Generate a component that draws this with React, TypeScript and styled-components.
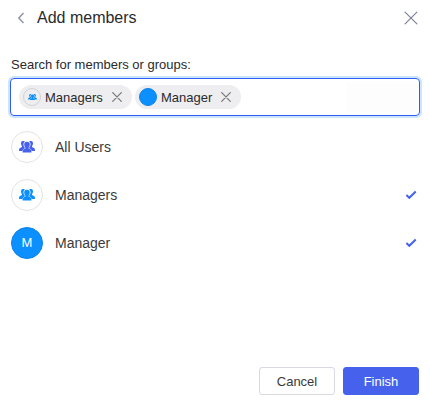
import React from "react";
import styled, { createGlobalStyle } from "styled-components";

const GlobalStyle = createGlobalStyle`
  * { box-sizing: border-box; }
  body {
    margin: 0;
    background: #fff;
    color: #333;
    font-family: "Liberation Sans", Arial, sans-serif;
  }
`;

const Dialog = styled.main`
  display: flex;
  flex-direction: column;
  width: 430px;
  height: 404px;
  overflow: hidden;
`;

const Header = styled.header`
  display: flex;
  align-items: center;
  height: 36px;
  padding: 0 12px 0 16px;
`;

const Title = styled.h1`
  flex: 1;
  margin: 0 0 0 11px;
  font-size: 16px;
  line-height: 24px;
  font-weight: 400;
  color: #2a2a2c;
`;

const IconButton = styled.button`
  display: flex;
  padding: 0;
  border: 0;
  background: none;
  svg { display: block; }
`;

const Label = styled.label`
  margin: 20px 11px 0;
  height: 16px;
  font-size: 13px;
  line-height: 17px;
  color: #2a2a2c;
`;

const TagField = styled.div`
  display: flex;
  align-items: center;
  gap: 3px;
  height: 38px;
  margin: 6px 10px 0;
  padding-left: 8px;
  border: 1px solid #2f5ef5;
  border-radius: 4px;
  box-shadow: 0 0 0 2px #cce5ff;
`;

const Chip = styled.div<{ $width: number }>`
  display: flex;
  align-items: center;
  width: ${(p) => p.$width}px;
  height: 24px;
  padding: 0 10px 0 4px;
  border-radius: 12px;
  background: #eeeef0;
  font-size: 13px;
  line-height: 24px;
  color: #2a2a2c;
`;

const ChipText = styled.span`
  flex: 1;
  margin-left: 4px;
  padding-top: 1px;
`;

const SearchInput = styled.input`
  width: 72px;
  height: 30px;
  margin-left: auto;
  padding: 0;
  border: 0;
  outline: 0;
  background: #fdfdfd;
`;

const List = styled.ul`
  flex: 1;
  margin: 7px 0 0;
  padding: 0 13px 0 11px;
  list-style: none;
`;

const Row = styled.li`
  display: flex;
  align-items: center;
  height: 48px;
  font-size: 14px;
  line-height: 20px;
  color: #3a3a3a;
`;

const RowName = styled.span`
  flex: 1;
  margin-left: 12px;
`;

const Avatar = styled.span<{ $size: number; $filled?: boolean }>`
  display: flex;
  flex: none;
  align-items: center;
  justify-content: center;
  width: ${(p) => p.$size}px;
  height: ${(p) => p.$size}px;
  border: 1px solid ${(p) => (p.$filled ? "#0b84eb" : p.$size > 20 ? "#e3e3e5" : "#d2d3d8")};
  border-radius: 50%;
  background: ${(p) => (p.$filled ? "#0c8fff" : p.$size > 20 ? "#fff" : "transparent")};
  color: #fff;
  font-size: 13px;
  svg { display: block; }
`;

const Footer = styled.footer`
  display: flex;
  justify-content: flex-end;
  gap: 8px;
  padding: 0 11px 9px;
`;

const Button = styled.button<{ $primary?: boolean }>`
  width: 76px;
  height: 28px;
  padding: 0;
  border: 1px solid ${(p) => (p.$primary ? "#4662ed" : "#d8d9e1")};
  border-radius: 3px;
  background: ${(p) => (p.$primary ? "#4662ed" : "#fff")};
  color: ${(p) => (p.$primary ? "#fff" : "#3a3a3a")};
  font: 13px "Liberation Sans", Arial, sans-serif;
`;

const Cross = ({ size, inset = 0.7, color }: { size: number; inset?: number; color: string }) => (
  <svg width={size} height={size} viewBox={`0 0 ${size} ${size}`} stroke={color} strokeWidth="1.2" strokeLinecap="round">
    <path
      d={`M${inset} ${inset} ${size - inset} ${size - inset}M${size - inset} ${inset} ${inset} ${size - inset}`}
    />
  </svg>
);

const Group = ({ width, color }: { width: number; color: string }) => (
  <svg width={width} height={(width * 12) / 16} viewBox="0 0 16 12" fill={color}>
    <path d="M4.600 0C2.800-.2 1.900.9 2 2.600c.1 1.200.4 2 1 2.600v.9C1.700 6.900 0 7.200 0 9v.9h3.600C3.800 8.500 4.800 7.900 6 7.500V6.800C4.900 5.800 4.600 4.800 4.500 3.600 4.400 2.300 4.900 1.400 5.900.8 5.600.4 5.200.1 4.600 0Z" />
    <path d="M11.400 0c1.800-.2 2.700.9 2.600 2.600-.1 1.200-.4 2-1 2.600v.9c1.300.8 3 1.100 3 2.900v.9h-3.600c-.2-1.400-1.200-2-2.400-2.400v-.7c1.100-1 1.400-2 1.500-3.200.1-1.300-.4-2.200-1.400-2.800.3-.4.7-.7 1.300-.8Z" />
    <path
      d="M8 .8C6.100.8 5.100 1.900 5.200 3.700c.1 1.300.5 2.200 1.200 2.900v.8C4.900 8.100 3.600 8.600 3.600 10.300v1.200h8.800v-1.200c0-1.700-1.300-2.200-2.800-2.900v-.8c.7-.7 1.100-1.600 1.200-2.900C10.900 1.900 9.900.8 8 .8Z"
      stroke="#fff"
      strokeOpacity=".5"
      strokeWidth=".8"
      paintOrder="stroke"
    />
  </svg>
);

const Check = () => (
  <svg width="12" height="10" viewBox="0 0 12 10" fill="none" stroke="#4662ed" strokeWidth="2">
    <path d="m1.400 5 2.900 2.800L10.700 1.500" />
  </svg>
);

const members = [
  { name: "All Users", color: "#4662ed", group: true, selected: false },
  { name: "Managers", color: "#0c8fff", group: true, selected: true },
  { name: "Manager", color: "#0c8fff", group: false, selected: true },
];

export default function App() {
  return (
    <>
      <GlobalStyle />
      <Dialog>
        <Header>
          <IconButton aria-label="Back">
            <svg width="10" height="12" viewBox="0 0 10 12" fill="none" stroke="#8d91a8" strokeWidth="1.4">
              <path d="M7.500 1 2.800 6l4.700 5" />
            </svg>
          </IconButton>
          <Title>Add members</Title>
          <IconButton aria-label="Close"><Cross size={14} inset={1.1} color="#7d8299" /></IconButton>
        </Header>
        <Label htmlFor="member-search">Search for members or groups:</Label>
        <TagField>
          <Chip $width={113}>
            <Avatar $size={18}><Group width={9} color="#0c8fff" /></Avatar>
            <ChipText>Managers</ChipText>
            <IconButton aria-label="Remove Managers"><Cross size={10} color="#75757a" /></IconButton>
          </Chip>
          <Chip $width={106}>
            <Avatar $size={18} $filled />
            <ChipText>Manager</ChipText>
            <IconButton aria-label="Remove Manager"><Cross size={10} color="#75757a" /></IconButton>
          </Chip>
          <SearchInput id="member-search" />
        </TagField>
        <List>
          {members.map((m) => (
            <Row key={m.name}>
              <Avatar $size={32} $filled={!m.group}>
                {m.group ? <Group width={16} color={m.color} /> : "M"}
              </Avatar>
              <RowName>{m.name}</RowName>
              {m.selected && <Check />}
            </Row>
          ))}
        </List>
        <Footer>
          <Button>Cancel</Button>
          <Button $primary>Finish</Button>
        </Footer>
      </Dialog>
    </>
  );
}
